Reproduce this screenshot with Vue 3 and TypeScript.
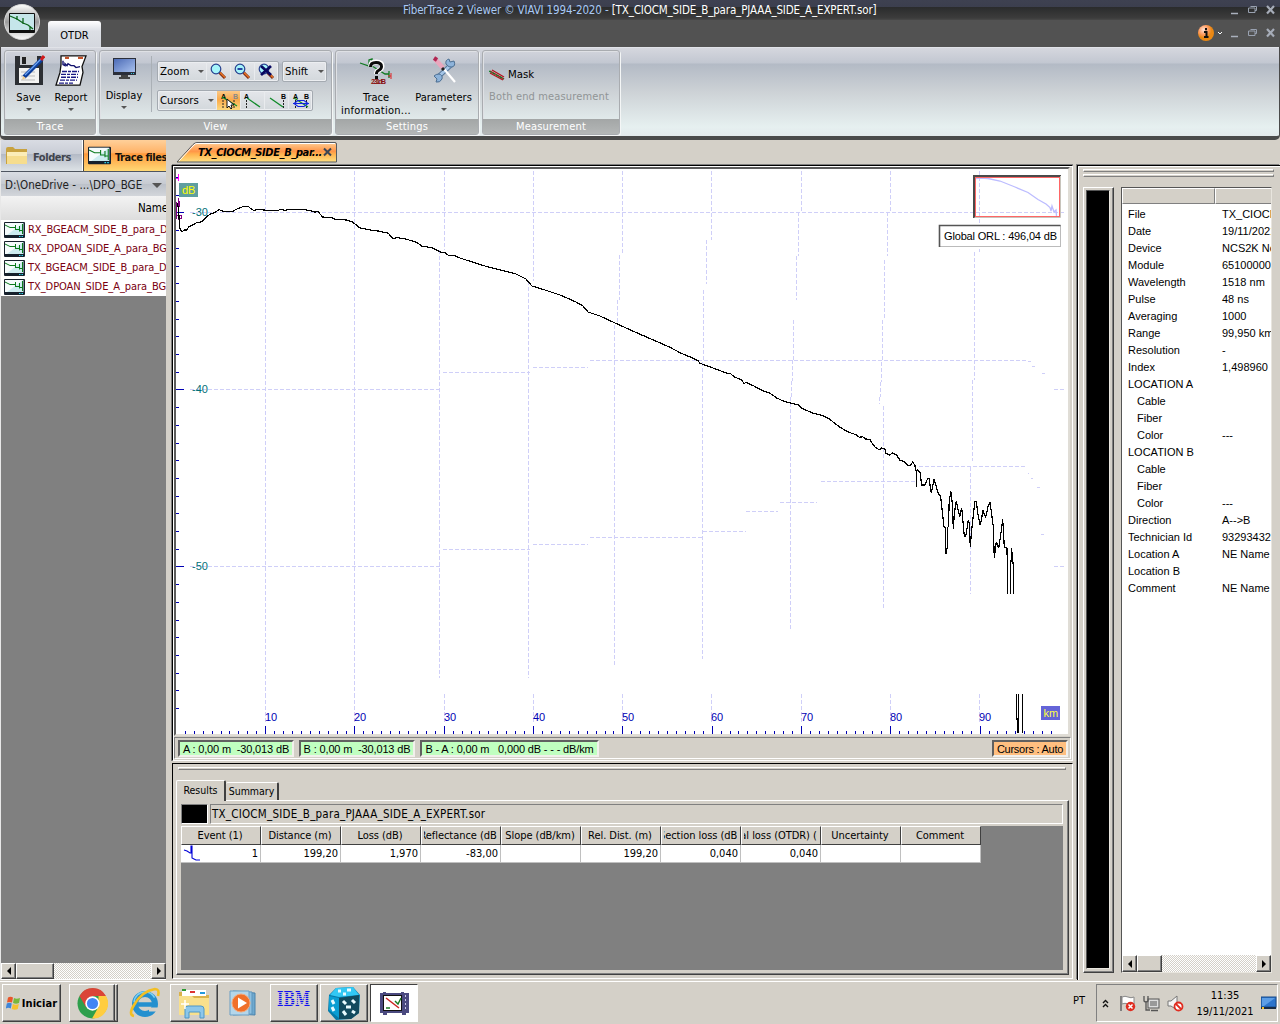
<script setup lang="ts">
interface Seg { x1: number; y1: number; x2: number; y2: number }

const files: string[] = [
  'RX_BGEACM_SIDE_B_para_DPOAN',
  'RX_DPOAN_SIDE_A_para_BGEACM',
  'TX_BGEACM_SIDE_B_para_DPOAN',
  'TX_DPOAN_SIDE_A_para_BGEACM',
]

const info: { k: string; v: string; sub?: boolean }[] = [
  { k: 'File', v: 'TX_CIOCM_SIDE_B' },
  { k: 'Date', v: '19/11/2021' },
  { k: 'Device', v: 'NCS2K Node' },
  { k: 'Module', v: '651000001' },
  { k: 'Wavelength', v: '1518 nm' },
  { k: 'Pulse', v: '48 ns' },
  { k: 'Averaging', v: '1000' },
  { k: 'Range', v: '99,950 km' },
  { k: 'Resolution', v: '-' },
  { k: 'Index', v: '1,498960' },
  { k: 'LOCATION A', v: '' },
  { k: 'Cable', v: '', sub: true },
  { k: 'Fiber', v: '', sub: true },
  { k: 'Color', v: '---', sub: true },
  { k: 'LOCATION B', v: '' },
  { k: 'Cable', v: '', sub: true },
  { k: 'Fiber', v: '', sub: true },
  { k: 'Color', v: '---', sub: true },
  { k: 'Direction', v: 'A-->B' },
  { k: 'Technician Id', v: '93293432' },
  { k: 'Location A', v: 'NE Name' },
  { k: 'Location B', v: '' },
  { k: 'Comment', v: 'NE Name' },
]

const columns: { h: string; v: string }[] = [
  { h: 'Event (1)', v: '1' },
  { h: 'Distance (m)', v: '199,20' },
  { h: 'Loss (dB)', v: '1,970' },
  { h: 'Reflectance (dB)', v: '-83,00' },
  { h: 'Slope (dB/km)', v: '' },
  { h: 'Rel. Dist. (m)', v: '199,20' },
  { h: 'Section loss (dB)', v: '0,040' },
  { h: 'Total loss (OTDR) (dB)', v: '0,040' },
  { h: 'Uncertainty', v: '' },
  { h: 'Comment', v: '' },
]

const H = (y: number, x1: number, x2: number): Seg => ({ x1, y1: y, x2, y2: y })
const V = (x: number, y1: number, y2: number): Seg => ({ x1: x, y1, x2: x, y2 })

const kmX = [265.5, 354.5, 444.5, 533.5, 622.5, 711.5, 801.5, 890.5, 979.5]
const kmLabels = [10, 20, 30, 40, 50, 60, 70, 80, 90]

const grid: Seg[] = [
  ...kmX.map((x) => V(x, 694, 723)),
  V(265.5, 171, 694), V(354.5, 171, 694),
  V(444.5, 171, 250), V(439.5, 250, 678),
  V(533.5, 171, 281), V(528.5, 281, 678),
  V(622.5, 171, 255), V(619.5, 255, 300), V(617.5, 300, 325), V(614.5, 325, 665),
  V(711.5, 171, 240), V(706.5, 240, 284), V(703.5, 290, 362), V(702.5, 362, 659),
  V(801.5, 171, 212), V(798.5, 212, 256), V(796.5, 256, 300), V(793.5, 320, 360),
  V(792.5, 360, 381), V(791.5, 381, 397), V(790.5, 397, 630),
  V(890.5, 171, 212), V(887.5, 212, 256), V(884.5, 260, 320), V(882.5, 320, 362), V(881.5, 362, 382),
  V(880.5, 382, 397), V(879.5, 397, 404), V(883.5, 406, 609),
  V(979.5, 171, 252), V(974.5, 252, 380), V(972.5, 380, 461), V(970.5, 467, 594),
  H(212.5, 190, 1064), H(389.5, 190, 440), H(372.5, 443, 530), H(367.5, 533, 588), H(360.5, 590, 1027),
  H(361.5, 1028, 1031), H(366.5, 1032, 1035), H(373.5, 1042, 1045), H(389.5, 1054, 1065),
  H(566.5, 190, 440), H(549.5, 443, 530), H(544.5, 533, 588), H(537.5, 590, 702), H(531.5, 703, 746),
  H(511.5, 746, 778), H(502.5, 780, 817), H(481.5, 821, 917), H(466.5, 919, 1025),
  H(473.5, 1028, 1029), H(478.5, 1031, 1033), H(487.5, 1037, 1040), H(534.5, 1041, 1044), H(566.5, 1054, 1065),
]

const xTicks = Array.from({ length: 98 }, (_, i) => 184.8 + i * 8.93)
const yTicks = Array.from({ length: 31 }, (_, i) => 177 + i * 17.7)

// Trace samples, stored per window as [x, y] thirds of a pixel from the window origin.
const scale = (ox: number, oy: number, s: string): string =>
  s.trim().split(/\s+/).map((p) => {
    const [x, y] = p.split(',').map(Number)
    return `${(ox + x / 3).toFixed(1)},${(oy + y / 3).toFixed(1)}`
  }).join(' ')

const trace: string = [
  scale(170, 160, `22,130 26,150 28,190 30,205 32,212 38,214 42,210 50,210 56,201 68,195 80,188 90,187 100,182 108,172 120,163 135,157 148,149 160,154 188,154 205,145 222,139 236,140 246,149 252,151 268,148 288,151 325,151 333,148 345,151 362,148 405,149 425,153 435,157 443,154 450,162 458,171 485,173 495,178 530,180 546,185 556,193 570,204 600,210 630,214 655,220 668,235 685,233 710,238 740,247 755,258 785,263 805,272 812,277 825,278 835,286 855,287 870,294 900,304`),
  '485,266 500,270 515,273.5 526,279 532,286 545,290 560,295 575,301.5 583,306 588,312 600,316 615,323 635,332',
  scale(440, 340, `640,0 690,22 720,38 760,55 775,63 780,70 800,77 830,88 855,98 872,101 882,110 905,120 913,131 918,127 940,137 970,153 988,158 1010,174 1030,183 1050,189 1075,194 1085,205 1120,220 1145,226 1168,236 1180,247 1200,262 1225,276 1250,285 1258,292 1268,290 1276,297 1290,298 1298,313 1306,322 1318,329 1325,324 1335,328 1338,340 1348,345 1358,339 1370,346 1380,361 1392,364 1402,375 1410,378 1418,366 1425,376`),
  scale(860, 440, `166,86 169,96 169,142 169,100 172,88 180,97 185,135 194,135 203,116 207,116 214,160 222,118 235,160 242,170 247,215 252,260 256,262 258,342 262,320 263,262 266,258 267,195 272,152 277,190 280,268 283,220 289,184 299,230 305,203 313,288 317,290 325,240 328,250 331,322 334,280 340,225 345,184 349,184 355,230 361,256 369,212 377,232 384,200 390,187 396,230 400,260 403,355 409,305 416,325 422,285 428,238 433,320 440,325 440,345 443,326 443,461`),
].join(' ')
</script>

<template>
  <svg class="defs" width="0" height="0">
    <symbol id="dev" viewBox="0 0 21 16">
      <rect width="21" height="16" rx="1" fill="#16202c" />
      <rect x="1" y="1" width="18.500" height="12" fill="#cdecf0" />
      <path d="M1 1h18L3 13H1z" fill="#fff" opacity=".8" />
      <path d="M1 3l5 2.500h5.500M11.500 3v5M11.500 7.500h4M15.500 4v5.500M15.500 8.500h3M18.500 2v10" fill="none" stroke="#0a7a1c" stroke-width="1" />
      <path d="M15 14.500h1.500m1 0h1.500" stroke="#2fd0ea" />
    </symbol>
    <symbol id="winctl" viewBox="0 0 46 10">
      <path d="M1 8.500h7" stroke="#aab0bc" stroke-width="1.500" />
      <path d="M20.500 1.500h6v4h-1.500M18.500 3h6.500v4.500h-6.500z" fill="none" stroke="#99a1b0" />
      <path d="M37 1l7 7.500M44 1l-7 7.500" stroke="#a6acb8" stroke-width="2.200" />
    </symbol>
    <symbol id="mag" viewBox="0 0 17 17">
      <path d="M9.500 9.500l5.500 5.500" stroke="#7c2b12" stroke-width="3" />
      <path d="M9.500 9l5.500 5.500" stroke="#e77324" stroke-width="1.500" />
      <circle cx="6" cy="6" r="4.800" fill="#a5f5fa" stroke="#27408f" stroke-width="1.200" />
    </symbol>
  </svg>

  <div class="app">
    <header class="title">
      <p><span>FiberTrace 2 Viewer © VIAVI 1994-2020 - </span>[TX_CIOCM_SIDE_B_para_PJAAA_SIDE_A_EXPERT.sor]</p>
      <svg class="ctl" width="46" height="10"><use href="#winctl" /></svg>
    </header>
    <div class="tabrow">
      <div class="rtab">OTDR</div>
      <div class="help">
        <svg width="28" height="18" viewBox="0 0 28 18">
          <defs><radialGradient id="hg" cx=".35" cy=".3"><stop offset="0" stop-color="#ffe3d6" /><stop offset=".6" stop-color="#ff9c62" /><stop offset="1" stop-color="#ea8813" /></radialGradient></defs>
          <circle cx="8" cy="9" r="8" fill="url(#hg)" />
          <path d="M8 4v2.200M6 8h2.500v5M6 13h4.500" stroke="#111" stroke-width="2" fill="none" />
          <path d="M20 8l2 2 2-2" fill="none" stroke="#fff" />
        </svg>
        <svg class="ctl" width="46" height="10"><use href="#winctl" /></svg>
      </div>
    </div>
    <svg class="orb" width="38" height="38" viewBox="0 0 38 38">
      <defs><linearGradient id="og" x2="0" y2="1"><stop offset="0" stop-color="#fff" /><stop offset=".5" stop-color="#9a9a9a" /><stop offset="1" stop-color="#fff" /></linearGradient></defs>
      <circle cx="19" cy="19" r="17.500" fill="url(#og)" stroke="#d8d8d8" />
      <rect x="6" y="10" width="26" height="20" rx="1" fill="#111" /><rect x="7" y="11" width="24" height="16" fill="#c6e6ea" />
      <path d="M7 13l7 3 6 4 5 2 5 4M14 13v4M20 15v6M27 23v4" stroke="#0b651a" fill="none" stroke-width="1.300" />
    </svg>

    <div class="ribbon">
      <section class="grp" style="width: 92px">
        <div class="gbody">
          <div class="big" style="width: 42px; margin-left: 4px">
            <svg width="30" height="31" viewBox="0 0 30 31">
              <path d="M0 1h26l2 2v27H0z" fill="#2c2f33" /><rect x="5" y="1" width="17" height="9" fill="#c9ccd0" /><rect x="7" y="2" width="4" height="7" fill="#222" />
              <rect x="4" y="13" width="20" height="15" fill="#f4f4f2" /><path d="M6 17h14M6 21h14M6 25h14" stroke="#bbb" />
              <path d="M9 22L27 4" stroke="#0c3e9c" stroke-width="4" /><path d="M10 20L26 4" stroke="#6fa4f0" stroke-width="1.200" /><path d="M26 5l3-4" stroke="#d11c1c" stroke-width="3" /><path d="M7 25l1-4 3 2z" fill="#eecb8a" />
            </svg>
            <b class="nudge">Save</b><i class="dn nudge" />
          </div>
          <div class="big" style="width: 42px; margin-left: -1px">
            <svg width="32" height="31" viewBox="0 0 32 32" preserveAspectRatio="none">
              <path d="M6 1h25l-4 11 1 6-3 13H1l4-13 1-8z" fill="#fff" stroke="#111" stroke-width="1.300" />
              <path d="M10 3h4m9 0h5" stroke="#c4532b" stroke-width="2.500" /><path d="M8 6v4l2 1v-2l2 2 1-2 3 2h3l2 2 4-1" stroke="#10106c" fill="none" stroke-width="1.400" />
              <path d="M7 17h17M6 20h17M6 23h17M5 26h17M4 29h14" stroke="#1b1b84" stroke-width="1.400" stroke-dasharray="5 1 3 1" />
            </svg>
            <b>Report</b><i class="dn" />
          </div>
        </div>
        <footer>Trace</footer>
      </section>

      <section class="grp" style="width: 233px; margin-left: 3px">
        <div class="gbody">
          <div class="big disp" style="width: 48px">
            <svg width="25" height="24" viewBox="0 0 25 24">
              <defs><linearGradient id="mg" x2="1" y2="1"><stop offset="0" stop-color="#4c6bb6" /><stop offset="1" stop-color="#a9c2ef" /></linearGradient></defs>
              <rect x="1" y="2" width="23" height="17" fill="#2b2f3a" /><rect x="2" y="3" width="21" height="13" fill="url(#mg)" /><path d="M9 19h7v2H9zM7 21h11v2H7z" fill="#444" /><path d="M19 17.500h4" stroke="#39c4e0" stroke-dasharray="1 1" />
            </svg>
            <b>Display</b><i class="dn" />
          </div>
          <div class="vsep" />
          <div class="bars">
            <div class="bar-line">
              <div class="tbar">
                <span class="drop" style="width: 48px">Zoom<i class="dn" /></span>
                <span class="tb"><svg width="17" height="17"><use href="#mag" /></svg></span>
                <span class="tb"><svg width="17" height="17"><use href="#mag" /><path d="M3.500 6h5" stroke="#0a1a90" stroke-width="1.600" /></svg></span>
                <span class="tb"><svg width="17" height="17"><use href="#mag" /><path d="M3 3l10 9M13 3L3 12" stroke="#070760" stroke-width="2.800" /></svg></span>
              </div>
              <div class="tbar" style="width: 45px; margin-left: 3px"><span class="drop" style="width: 43px">Shift<i class="dn" /></span></div>
            </div>
            <div class="bar-line">
              <div class="tbar">
                <span class="drop" style="width: 58px">Cursors<i class="dn" /></span>
                <span class="tb hot"><svg width="20" height="18" viewBox="0 0 20 18"><text x="2" y="6.500" class="ab">A</text><text x="14" y="6.500" class="ab" fill="#888">B</text><path d="M4 8v9M15 8v9" stroke="#222" stroke-dasharray="2 1" /><path d="M3 5l15 9" stroke="#0f8a28" stroke-width="1.200" /><path d="M8 7v9l2-2 2 3 1-1-1-3h3z" fill="#fff" stroke="#111" /></svg></span>
                <span class="tb"><svg width="20" height="18" viewBox="0 0 20 18"><text x="1" y="6.500" class="ab">A</text><path d="M3.500 8v9" stroke="#222" stroke-dasharray="2 1" /><path d="M4 6l13 9" stroke="#0f8a28" stroke-width="1.300" /></svg></span>
                <span class="tb"><svg width="20" height="18" viewBox="0 0 20 18"><text x="14" y="6.500" class="ab">B</text><path d="M16.500 8v9" stroke="#222" stroke-dasharray="2 1" /><path d="M3 6l13 9" stroke="#0f8a28" stroke-width="1.300" /></svg></span>
                <span class="tb"><svg width="20" height="18" viewBox="0 0 20 18"><text x="2" y="6.500" class="ab">A</text><text x="13" y="6.500" class="ab">B</text><path d="M4.500 8v9M15.500 8v9" stroke="#222" stroke-dasharray="2 1" /><path d="M3 6l14 9" stroke="#0f8a28" stroke-width="1.200" /><path d="M2 11.500h16M7 8.500l-4 3 4 3h6l4-3-4-3z" fill="none" stroke="#1226e0" stroke-width="1.100" /></svg></span>
              </div>
            </div>
          </div>
        </div>
        <footer>View</footer>
      </section>

      <section class="grp" style="width: 144px; margin-left: 3px">
        <div class="gbody">
          <div class="big" style="width: 72px; margin-left: 4px">
            <svg width="34" height="31" viewBox="0 0 34 31">
              <path d="M1 8l9 3V5l3-1v7l13 8h4M30 16v7" stroke="#127a22" fill="none" stroke-width="1.300" /><path d="M29 21h3m0-3v6" stroke="#d22" />
              <text x="12" y="29" font-size="7" font-weight="bold" fill="#8a1010" font-family="Liberation Sans" textLength="15">2.31dB</text>
              <path d="M11.500 11.500q0-4.500 5.500-4.500 6 0 6 4 0 3-3.500 4.500-2 1-2 3.500" fill="none" stroke="#fff" stroke-width="5" /><path d="M11.500 12q0-4.500 5.500-4.500 5.500 0 5.500 4 0 2.500-3 4-2 1-2 3.500M17.500 21v3" fill="none" stroke="#0a0a0a" stroke-width="3" />
            </svg>
            <b>Trace</b><b class="wide">information...</b>
          </div>
          <div class="big" style="width: 63px">
            <svg class="tools" width="25" height="31" viewBox="0 0 25 31">
              <path d="M5 23L20 9" stroke="#56789c" stroke-width="5" /><path d="M5 23L20 9" stroke="#a5c5e6" stroke-width="3" />
              <path d="M2 21l3 3-1 3q4 1 6-3 1-4-3-5-3 0-5 2zM22 6l-4 1-1-3q-4 1-3 5 3 4 6 3 4-1 2-6z" fill="#8db3da" stroke="#4d6f92" />
              <path d="M12 14l11 13" stroke="#fff" stroke-width="2.200" /><path d="M3 4l8 9" stroke="#e9a7bd" stroke-width="4.500" /><path d="M2 3l3 2" stroke="#b12652" stroke-width="4" /><path d="M10 13l2 2" stroke="#222" stroke-width="3" />
            </svg>
            <b>Parameters</b><i class="dn" />
          </div>
        </div>
        <footer>Settings</footer>
      </section>

      <section class="grp" style="width: 138px; margin-left: 3px">
        <div class="gbody meas">
          <div class="mask"><svg width="17" height="12" viewBox="0 0 17 12"><path d="M1 2l14 8M1 4l13 7M3 1l12 7" stroke="#b5121b" stroke-width="1.300" /><path d="M0 2l15 8" stroke="#138126" stroke-width="1.200" stroke-dasharray="3 1" /></svg>Mask</div>
          <div class="both">Both end measurement</div>
        </div>
        <footer>Measurement</footer>
      </section>
    </div>

    <main class="main">
      <aside class="left">
        <div class="ltabs">
          <div class="lt"><svg width="24" height="22" viewBox="0 0 24 22"><path d="M1 4q0-2 2-2h5l2 2h12v15H1z" fill="#c8a23f" /><path d="M2 7h20v12H2z" fill="#f6dd8e" /><path d="M2 7h20v4H2z" fill="#fbedb8" /></svg><span>Folders</span></div>
          <div class="lt on"><svg width="23" height="19"><use href="#dev" /></svg><span>Trace files</span></div>
        </div>
        <div class="path"><span>D:\OneDrive - ...\DPO_BGE</span><i class="dn lg" /></div>
        <div class="name"><span>Name</span></div>
        <div v-for="f in files" :key="f" class="file"><svg width="21" height="16"><use href="#dev" /></svg><span>{{ f }}</span></div>
        <div class="fill" />
        <div class="hscroll"><span class="sbtn"><i class="ar l" /></span><span class="thumb" style="width: 38px" /><span class="grow" /><span class="sbtn"><i class="ar r" /></span></div>
      </aside>

      <div class="center">
        <div class="doctabs">
          <svg width="162" height="24" viewBox="0 0 162 24">
            <defs><linearGradient id="tg" x2="0" y2="1"><stop offset="0" stop-color="#ffd09a" /><stop offset=".2" stop-color="#ffb572" /><stop offset=".45" stop-color="#ff9548" /><stop offset=".6" stop-color="#ffb34f" /><stop offset="1" stop-color="#ffe081" /></linearGradient></defs>
            <path d="M2 22L18 4.500q2-2 4-2H160q1.500 0 1.500 1.500V22z" fill="url(#tg)" stroke="#555b62" />
            <path d="M4 21L19 5q1-1.500 3-1.500H160" fill="none" stroke="#fff" />
            <path d="M149 8.500l7 7m0-7l-7 7" stroke="#3c4654" stroke-width="2" />
          </svg>
          <span>TX_CIOCM_SIDE_B_par...</span>
        </div>

        <div class="frame">
          <div class="plot">
            <svg width="892" height="565" viewBox="176 169 892 565">
              <g shape-rendering="crispEdges" fill="none">
                <line v-for="(s, i) in grid" :key="i" v-bind="s" stroke="#cfcff8" stroke-dasharray="4 2" />
                <path v-for="(y, i) in yTicks" :key="'y' + i" :d="`M176 ${Math.round(y) + 0.5}h${i % 10 === 2 ? 8 : 3}`" stroke="#0000b4" />
                <path v-for="(x, i) in xTicks" :key="'x' + i" :d="`M${Math.round(x) + 0.5} 733.500v-${i % 10 === 9 ? 8 : 3}`" stroke="#0000b4" />
                <path d="M178.500 174v7M176 178.500h3" stroke="#f0f" />
                <path d="M178.500 198v22M176.500 202v17M179.500 201v6M176 215.500h5.500v3h-3" stroke="#800080" stroke-width="1.500" />
                <polyline :points="trace" stroke="#000" stroke-width="1.200" />
                <path d="M1007.500 548v46M1010.500 560v34M1011.500 548v14M1012.500 552v12M1013.500 562v32" stroke="#000" />
                <path d="M1016.500 694v26M1018.500 694v39M1022.500 694v39M1017.500 718v15" stroke="#000" />
              </g>
              <text v-for="(k, i) in kmLabels" :key="k" :x="kmX[i] - 0.5" y="721" class="ax km">{{ k }}</text>
              <text x="192" y="216" class="ax">-30</text>
              <text x="192" y="393" class="ax">-40</text>
              <text x="192" y="570" class="ax">-50</text>
              <rect x="179" y="183" width="19" height="14" fill="#5f9ea0" />
              <text x="182" y="194" class="ax" style="fill: #ff0">dB</text>
              <rect x="1041" y="706" width="19" height="14" fill="#6464d8" />
              <text x="1043.500" y="717" class="ax" style="fill: #ff4">km</text>
              <g fill="none">
                <path d="M974 218v-42h87" stroke="#4a4a4a" stroke-width="2" />
                <path d="M1060.500 176v41.500h-86" stroke="#c8c4bc" />
                <polyline points="976,178.500 981,178 988,178.500 1000,181 1015,187 1028,192.500 1038,199.500 1046,204 1050,207.500 1051,211 1052,206 1054,212 1056,210 1056.500,216" stroke="#bcbcff" stroke-width="1.300" />
                <rect x="975.500" y="177.500" width="84" height="39" stroke="#f66" />
              </g>
              <rect x="939.500" y="225.500" width="121" height="21" fill="#fff" stroke="#bbb" />
              <path d="M939.500 247v-21.500h121" fill="none" stroke="#555" stroke-width="1.600" />
              <text x="944" y="240" class="ms" textLength="113">Global ORL : 496,04 dB</text>
            </svg>
          </div>
          <div class="status">
            <span class="cell" style="width: 116px">A : 0,00 m&nbsp; -30,013 dB</span>
            <span class="cell" style="width: 116px; margin-left: 5px">B : 0,00 m&nbsp; -30,013 dB</span>
            <span class="cell" style="width: 179px; margin-left: 5px">B - A : 0,00 m&nbsp;&nbsp; 0,000 dB - - - dB/km</span>
            <span class="cell auto">Cursors : Auto</span>
          </div>
        </div>

        <div class="results">
          <div class="grip" />
          <div class="rtabs"><span class="rt act">Results</span><span class="rt">Summary</span></div>
          <div class="page">
            <div class="fname"><span class="sw" /><span class="fn">TX_CIOCM_SIDE_B_para_PJAAA_SIDE_A_EXPERT.sor</span></div>
            <div class="gray">
              <div class="trow th"><span v-for="c in columns" :key="c.h"><em>{{ c.h }}</em></span></div>
              <div class="trow td">
                <span v-for="(c, i) in columns" :key="c.h">
                  <svg v-if="i === 0" width="18" height="17" viewBox="0 0 18 17"><path d="M1 5l3 1 3 2h1V1h1v12l2 1 2 1h4" fill="none" stroke="#0000d8" stroke-width="1.100" /></svg>{{ c.v }}
                </span>
              </div>
            </div>
          </div>
        </div>
      </div>

      <aside class="right">
        <div class="grip" /><div class="grip g2" />
        <div class="rcols">
          <div class="black"><div /></div>
          <div class="info">
            <div class="ih"><span /><span /></div>
            <div v-for="(r, i) in info" :key="i" class="ir"><span :class="{ sub: r.sub }">{{ r.k }}</span><span>{{ r.v }}</span></div>
            <div class="grow" />
            <div class="hscroll"><span class="sbtn"><i class="ar l" /></span><span class="thumb" style="width: 25px" /><span class="grow" /><span class="sbtn"><i class="ar r" /></span></div>
          </div>
        </div>
      </aside>
    </main>

    <footer class="taskbar">
      <div class="tk start">
        <svg width="15" height="14" viewBox="0 0 15 14"><path d="M2 1.500q2.500-1.500 5 0L6 6.500q-2.500-1.200-5 0z" fill="#e8562a" /><path d="M8 2q2.500 1.500 6 0l-1 5q-3 1.300-6 0z" fill="#77b83c" /><path d="M.8 7.500q2.500-1.400 5 0l-1 5q-2.500-1.300-5 0z" fill="#3f86d8" /><path d="M6.800 8q2.700 1.500 6 0l-1 5q-3 1.500-6 0z" fill="#f6c22f" /></svg>
        <span>Iniciar</span>
      </div>
      <div class="tk" style="width: 46px; margin-left: 8px"><svg width="31" height="31" viewBox="0 0 31 31"><circle cx="15.500" cy="15.500" r="15" fill="#2f9f4c" /><path d="M2.500 8A15 15 0 0 1 29 8H15.500l-6.300 11.500z" fill="#db4437" /><path d="M29 8A15 15 0 0 1 15 30.500L21.500 19V8z" fill="#ffcd40" /><circle cx="15.500" cy="15.500" r="7.200" fill="#fff" /><circle cx="15.500" cy="15.500" r="5.600" fill="#4285f4" /></svg></div>
      <div class="tk side" />
      <div class="ico" style="width: 51px"><svg width="32" height="32" viewBox="0 0 32 32"><circle cx="16" cy="17" r="10" fill="none" stroke="#2490cf" stroke-width="6" /><path d="M7 17.500h21" stroke="#2490cf" stroke-width="4.500" /><path d="M20 22.500h11" stroke="#d4d0c8" stroke-width="4" /><circle cx="16" cy="16" r="11" fill="none" stroke="#7cd0f4" stroke-width="1.500" stroke-dasharray="28 80" stroke-dashoffset="-35" /><path d="M5 29Q-1 28 5 18 13 4 26 2q5 0 3 7" fill="none" stroke="#f3bf23" stroke-width="2.600" /></svg></div>
      <div class="tk" style="width: 48px"><svg width="34" height="32" viewBox="0 0 34 32"><path d="M2 5h10l2 3h18v20H2z" fill="#d9b24c" /><path d="M5 3h24v6H5z" fill="#fff" /><path d="M5 3h4M14 5h4M23 6h4" stroke="#2b9a33" stroke-width="2" /><path d="M13 5h5" stroke="#d33" stroke-width="2" /><path d="M23 6h5" stroke="#29d" stroke-width="2" /><path d="M2 9h13l2 2h15v17H2z" fill="#f8e08d" /><path d="M8 31v-9q0-3 3-3h13q3 0 3 3v9h-4v-6H12v6z" fill="#8cc7ea" stroke="#4c97c8" /><path d="M8 13v9M4 17h8" stroke="#fff" stroke-width="1.500" /></svg></div>
      <div class="ico" style="width: 52px"><svg width="30" height="28" viewBox="0 0 30 28"><path d="M8 3l18 1v22l-18-1z" fill="#6fa9cf" stroke="#4a82ab" /><path d="M4 2l19 1v22L4 26z" fill="#8ec0e0" stroke="#5d95bd" /><path d="M1 2h19v24H1z" fill="#b4d6ea" stroke="#6a9fc5" /><circle cx="12" cy="14" r="9" fill="#f0702a" /><circle cx="12" cy="14" r="9" fill="none" stroke="#f7a878" /><path d="M9 8.500l9 5.500-9 5.500z" fill="#fff" /></svg></div>
      <div class="tk ibm" style="width: 48px">
        <svg width="34" height="18" viewBox="0 0 34 18">
          <text x="0" y="16.500" textLength="33" lengthAdjust="spacingAndGlyphs">IBM</text>
          <path v-for="n in 7" :key="n" :d="`M0 ${n * 2 + 1.5}h34`" stroke="#d4d0c8" stroke-width=".8" />
        </svg>
      </div>
      <div class="tk" style="width: 48px; margin-left: 2px"><svg width="34" height="34" viewBox="0 0 34 34"><path d="M9 2l17-1 7 8-1 18-8 6-15 1-8-9L2 9z" fill="#067aa8" /><path d="M9 2l17-1 6 8-20 2-9-2z" fill="#32c8f4" /><path d="M2 10l10 2v20L2 24z" fill="#0a9dd2" /><path d="M12 12l20-3v18l-8 6H12z" fill="#124a5e" /><path d="M11 5h3M20 4h4M16 8h3M5 14l2 4M5 21l2 4M16 15l3 3M25 14l3 3M19 21h5M16 25l3 4M25 25l3 2" stroke="#e9fbff" stroke-width="3" /></svg></div>
      <div class="tk active" style="width: 48px; margin-left: 2px"><svg width="32" height="25" viewBox="0 0 32 25"><path d="M2 2h3V1h3v1h15V1h3v1h5v20h-3v2h-4v-2H9v2H5v-2H2z" fill="#4b4a80" /><rect x="5" y="4" width="19" height="16" fill="#111" /><rect x="6" y="5" width="17" height="14" fill="#fff" /><path d="M8 7l13 10" stroke="#c22" stroke-width="1.500" /><path d="M8 17h4M17 10l3 3 3-6" stroke="#187a22" fill="none" stroke-width="1.400" /><path d="M27.500 4v16" stroke="#c9c9e8" stroke-dasharray="2 2" /></svg></div>
      <span class="lang">PT</span>
      <div class="tray">
        <svg class="chev" width="7" height="9" viewBox="0 0 7 9"><path d="M1 4l2.500-2.500L6 4M1 8l2.500-2.500L6 8" fill="none" stroke="#111" stroke-width="1.400" /></svg>
        <svg width="18" height="17" viewBox="0 0 18 17"><path d="M2 1v15" stroke="#777" stroke-width="1.800" /><path d="M3 2q3-1.500 6 0t6 0v7q-3 1.500-6 0t-6 0z" fill="#fff" stroke="#888" /><circle cx="11.500" cy="11.500" r="4.700" fill="#e02c20" /><path d="M9.500 9.500l4 4m0-4l-4 4" stroke="#fff" stroke-width="1.500" /></svg>
        <svg width="18" height="17" viewBox="0 0 18 17"><rect x="5" y="4" width="11" height="9" fill="#ddd" stroke="#555" /><rect x="7" y="6" width="7" height="5" fill="#999" /><path d="M8 15.500h7M1 1v5q2 2 4 0V1M3 7v8h4" stroke="#555" fill="none" stroke-width="1.300" /></svg>
        <svg width="18" height="17" viewBox="0 0 18 17"><path d="M1 6h3l6-5v14l-6-4H1z" fill="#f5f5f5" stroke="#777" /><circle cx="11.500" cy="11.500" r="4" fill="#fff" stroke="#e02c20" stroke-width="1.800" /><path d="M9 9l5 5" stroke="#e02c20" stroke-width="1.800" /></svg>
        <div class="clock"><span>11:35</span><span>19/11/2021</span></div>
        <svg width="16" height="14" viewBox="0 0 16 14"><rect x="0" y="1" width="15" height="10" fill="#2c74cc" stroke="#174a8a" /><path d="M0 11h15v2H0z" fill="#1a2c45" /><path d="M1 2h13L3 10H1z" fill="#5d9ee6" /><path d="M1 12h2" stroke="#f8c22b" stroke-width="2" /></svg>
      </div>
    </footer>
  </div>
</template>

<style>
body { margin: 0; overflow: hidden; }
</style>

<style scoped>
* { box-sizing: border-box; }
.defs { position: absolute; }
.app { position: relative; width: 1280px; height: 1024px; display: flex; flex-direction: column; overflow: hidden; background: #d4d0c8; font: 11px/13px "DejaVu Sans Condensed", "DejaVu Sans", sans-serif; font-stretch: condensed; color: #000; white-space: nowrap; }
svg { display: block; flex: none; }
b { font-weight: normal; }
.grow { flex: 1; }
.title { height: 20px; flex: none; display: flex; align-items: center; justify-content: flex-end; background: linear-gradient(#3e4151 0, #3c3f4e 7px, #2a2b2c 7px, #3c3c3c 18px, #484848); }
.title p { margin: 0; width: 827px; color: #fff; letter-spacing: -.14px; font-size: 11.500px; }
.title p span { color: #a9c9f5; white-space: pre; }
.ctl { margin-right: 4px; }
.tabrow { height: 27px; flex: none; display: flex; justify-content: space-between; background: #525252; }
.rtab { width: 53px; height: 26px; margin: 1px 0 0 48px; border-radius: 3px 3px 0 0; background: linear-gradient(#fff, #dcdfe5 40%, #d4d7de); text-align: center; line-height: 29px; z-index: 1; }
.help { display: flex; align-items: center; gap: 4px; height: 26px; }
.orb { position: absolute; left: 3px; top: 3px; z-index: 2; }
.ribbon { height: 93px; flex: none; display: flex; border: solid #4a4a4a; border-width: 0 1px 4px 1px; background: linear-gradient(#eceef2 0, #d5d7de 1px, #c2c7d1 16px, #b3bac5 17px, #cdd2d6 45px, #e6f0f0 80px, #e3eaec 88px); border-radius: 0 0 5px 5px; padding: 3px 0 0 3px; }
.grp { height: 85px; flex: none; display: flex; flex-direction: column; border: 1px solid #a9acb0; border-radius: 3px; box-shadow: 1px 1px 0 #f4f6f6, inset 1px 1px 0 #dfe1e5; }
.grp footer { height: 15px; flex: none; background: linear-gradient(#a3a6a6, #b4b7b7); color: #fff; text-align: center; line-height: 16px; letter-spacing: .18px; }
.gbody { flex: 1; display: flex; min-height: 0; }
.big { display: flex; flex-direction: column; align-items: center; padding-top: 4px; flex: none; }
.big b { line-height: 13px; }
.big b.wide { letter-spacing: .25px; }
.big svg + b { margin-top: 5px; }
.big .nudge { margin-right: 3px; }
.big .tools { margin-left: 2px; }
.big.disp svg { margin-top: 1px; }
.big.disp svg + b { margin-top: 9px; }
.dn { display: block; border: 3px solid transparent; border-top-color: #555; border-bottom: 0; flex: none; }
.big .dn { margin-top: 4px; }
.vsep { width: 1px; margin: 5px 5px 7px 3px; background: #aab0b6; }
.bars { padding-top: 10px; display: flex; flex-direction: column; gap: 8px; font-size: 11.300px; }
.bar-line { display: flex; }
.tbar { height: 21px; display: flex; border: 1px solid #a4aab1; border-radius: 2px; background: linear-gradient(#e4e6ea, #d3d8dc); box-shadow: inset 0 0 0 1px #eceef1; }
.drop { display: flex; align-items: center; justify-content: space-between; padding: 0 2px; height: 19px; }
.tb { width: 24px; display: flex; align-items: center; justify-content: center; border-left: 1px solid #e9ebee; }
.hot { background: linear-gradient(#fbc988, #f9a94a 45%, #fdd97e); }
.ab { font: bold 7px "Liberation Sans", sans-serif; }
.meas { flex-direction: column; padding: 16px 0 0 6px; }
.mask { display: flex; align-items: center; gap: 2px; height: 15px; font-size: 11.300px; }
.both { color: #909496; margin-top: 7px; height: 15px; line-height: 15px; letter-spacing: .15px; }

.main { height: 840px; flex: none; display: flex; }
.left { width: 166px; flex: none; display: flex; flex-direction: column; overflow: hidden; border-left: 1px solid #e8e8e8; background: #fff; }
.ltabs { height: 32px; flex: none; display: flex; border-bottom: 1px solid #4f5560; }
.lt { width: 81px; flex: none; display: flex; align-items: center; font-weight: bold; color: #3f444d; background: linear-gradient(#d9dce3 0, #c9cdd6 45%, #b4bac6 46%, #dde2e6); padding-left: 4px; gap: 4px; letter-spacing: -.45px; padding-top: 3px; }
.lt svg { margin-top: -3px; }
.lt.on { width: 90px; border-left: 1px solid #444; color: #15120c; background: linear-gradient(#ffd09a, #ffb368 40%, #ff9a3c 45%, #ffd976); margin-left: 1px; }
.path { height: 24px; flex: none; display: flex; align-items: center; justify-content: space-between; padding: 2px 4px 0 4px; background: linear-gradient(#dadde3, #c6cad1 50%, #bcc1c9 51%, #d3d6db); color: #222; font-size: 11.500px; letter-spacing: .04px; }
.dn.lg { border-width: 5px 5px 0; }
.name { height: 24px; flex: none; background: linear-gradient(#f3f3f3, #ddd); text-align: left; line-height: 25px; padding-left: 137px; font-size: 11.500px; letter-spacing: -.15px; }
.file { height: 19px; flex: none; display: flex; align-items: center; gap: 3px; padding-left: 3px; color: #7a0010; letter-spacing: -.06px; }
.fill { flex: 1; background: #808080; }
.hscroll { height: 17px; flex: none; display: flex; background: repeating-conic-gradient(#fff 0 25%, #d4d0c8 0 50%) 0 0 / 2px 2px; }
.left .hscroll { height: 16px; margin-bottom: 1px; }
.sbtn, .thumb { background: #d4d0c8; border: 1px solid; border-color: #fff #404040 #404040 #fff; box-shadow: inset -1px -1px 0 #808080; flex: none; }
.sbtn { width: 15px; display: flex; align-items: center; justify-content: center; }
.ar { border: 4px solid transparent; }
.ar.l { border-right-color: #000; border-left: 0; }
.ar.r { border-left-color: #000; border-right: 0; }

.center { width: 902px; margin-left: 6px; flex: none; display: flex; flex-direction: column; }
.doctabs { height: 24px; flex: none; position: relative; padding-left: 3px; }
.doctabs span { position: absolute; left: 26px; top: 6px; font-weight: bold; font-style: italic; letter-spacing: -.38px; }
.frame { height: 596px; margin-top: 1px; flex: none; border: 1px solid #000; border-right-color: #fff; border-bottom-color: #fff; box-shadow: inset 1px 1px 0 #fff, 0 -1px 0 #808080, -1px 0 0 #808080; padding: 1px; display: flex; flex-direction: column; width: 901px; }
.plot { height: 569px; width: 896px; background: #fff; border: 2px solid; border-color: #5c5c5c #e0ddd6 #e0ddd6 #5c5c5c; flex: none; }
.ax { font: 11px "Liberation Sans", Arial, sans-serif; fill: #007078; }
.ax.km { fill: #0000b4; }
.ms { font: 11px "Liberation Sans", Arial, sans-serif; }
.status { height: 22px; margin: 1px 0 0 0; border: 1px solid; border-color: #808080 #fff #fff #808080; padding: 2px 2px 2px 3px; display: flex; }
.cell { height: 17px; border: 2px solid; border-color: #606060 #f2f0ec #f2f0ec #606060; background: #c0ffc0; font: 11px/14px "Liberation Sans", Arial, sans-serif; text-align: center; flex: none; letter-spacing: -.15px; }
.auto { width: 76px; margin-left: auto; background: #ffbf80; letter-spacing: -.25px; }
.results { height: 216px; margin-top: 2px; width: 901px; flex: none; border: 1px solid #000; border-color: #000 #fff #fff #000; padding: 3px; display: flex; flex-direction: column; }
.grip { height: 3px; flex: none; border: 1px solid; border-color: #fff #808080 #808080 #fff; margin: 0 3px 0 2px; }
.results .grip { margin-bottom: 9px; }
.rtabs { display: flex; align-items: flex-end; height: 21px; flex: none; }
.rt { height: 18px; width: 53px; border: solid #fff; border-width: 1px 2px 0 0; border-right-color: #404040; text-align: center; line-height: 17px; border-radius: 2px 2px 0 0; font-size: 10.500px; }
.rt.act { height: 21px; width: 50px; border-left: 1px solid #fff; line-height: 19px; margin-bottom: -1px; background: #d4d0c8; z-index: 1; }
.page { height: 175px; flex: none; border: 1px solid; border-color: #fff #404040 #404040 #fff; box-shadow: inset -1px -1px 0 #808080; padding: 3px 5px 4px 4px; display: flex; flex-direction: column; }
.fname { height: 20px; flex: none; display: flex; gap: 2px; }
.sw { width: 27px; background: #000; border: 1px solid #808080; border-right-color: #fff; border-bottom-color: #fff; }
.fn { flex: 1; border: 1px solid; border-color: #808080 #fff #fff #808080; padding-left: 1px; font-size: 11.500px; line-height: 18px; letter-spacing: .23px; }
.gray { flex: 1; margin-top: 2px; background: #808080; }
.trow { display: flex; width: 800px; }
.trow > span { width: 80px; flex: none; height: 18px; overflow: hidden; display: flex; align-items: center; }
.th > span { height: 19px; background: #d4d0c8; border: 1px solid; border-color: #fff #404040 #404040 #fff; justify-content: center; padding: 0; }
.th em { font-style: normal; flex: 0 0 auto; display: flex; justify-content: center; width: 73px; overflow: hidden; margin-right: 2px; letter-spacing: -.05px; }
.td > span { background: #fff; border: solid #c0c0c0; border-width: 0 1px 1px 0; justify-content: flex-end; padding-right: 2px; }
.td svg { margin-right: auto; margin-left: 2px; }

.right { width: 203px; height: 815px; margin: 25px 0 0 3px; flex: none; border: solid #000; border-width: 1px 0 0 1px; box-shadow: -1px -1px 0 #808080, inset 1px 1px 0 #fff; padding: 3px 2px 7px 5px; display: flex; flex-direction: column; overflow: hidden; }
.right .grip { margin: 0 4px 0 0; }
.right .g2 { margin-top: 2px; }
.rcols { flex: 1; min-height: 0; display: flex; margin-top: 10px; gap: 7px; }
.black { width: 31px; border: 1px solid; border-color: #fff #404040 #404040 #fff; box-shadow: inset -1px -1px 0 #808080; padding: 2px 3px 3px 2px; }
.black div { height: 100%; background: #000; border: 1px solid; border-color: #555 #e8e5de #e8e5de #555; }
.info { width: 151px; background: #fff; border: 1px solid; border-color: #555 #e8e5de #e8e5de #555; overflow: hidden; display: flex; flex-direction: column; font: 11px/17px "Liberation Sans", Arial, sans-serif; }
.ih { height: 16px; flex: none; display: flex; margin-bottom: 2px; }
.ih span { width: 93px; flex: none; background: #d4d0c8; border: 1px solid; border-color: #fff #808080 #808080 #fff; }
.ir { height: 17px; flex: none; display: flex; }
.ir span { width: 94px; padding-left: 6px; flex: none; }
.ir span.sub { padding-left: 15px; }

.taskbar { height: 44px; flex: none; border-top: 1px solid #d4d0c8; box-shadow: inset 0 1px 0 #fff; display: flex; padding: 3px 0 0 2px; background: #d4d0c8; }
.tk { height: 38px; flex: none; border: 1px solid; border-color: #fff #404040 #404040 #fff; box-shadow: inset -1px -1px 0 #808080; display: flex; align-items: center; justify-content: center; }
.start { width: 59px; font-weight: bold; gap: 1px; letter-spacing: .05px; }
.side { width: 3px; border-left: 0; margin-right: 1px; }
.ico { height: 38px; flex: none; display: flex; align-items: center; justify-content: center; }
.ibm { align-items: flex-start; padding-top: 4px; }
.ibm text { font: bold 21px "DejaVu Serif", serif; fill: #1010f0; }
.active { background: #fff; border-color: #404040 #fff #fff #404040; box-shadow: none; }
.lang { margin-left: auto; width: 23px; line-height: 34px; }
.tray { width: 182px; height: 38px; margin-right: 2px; border: 1px solid; border-color: #808080 #fff #fff #808080; display: flex; align-items: center; padding-left: 5px; gap: 6px; flex: none; }
.chev { margin-right: 4px; }
.clock { width: 58px; display: flex; flex-direction: column; align-items: center; line-height: 16px; margin: 1px 1px 0 5px; }
</style>
